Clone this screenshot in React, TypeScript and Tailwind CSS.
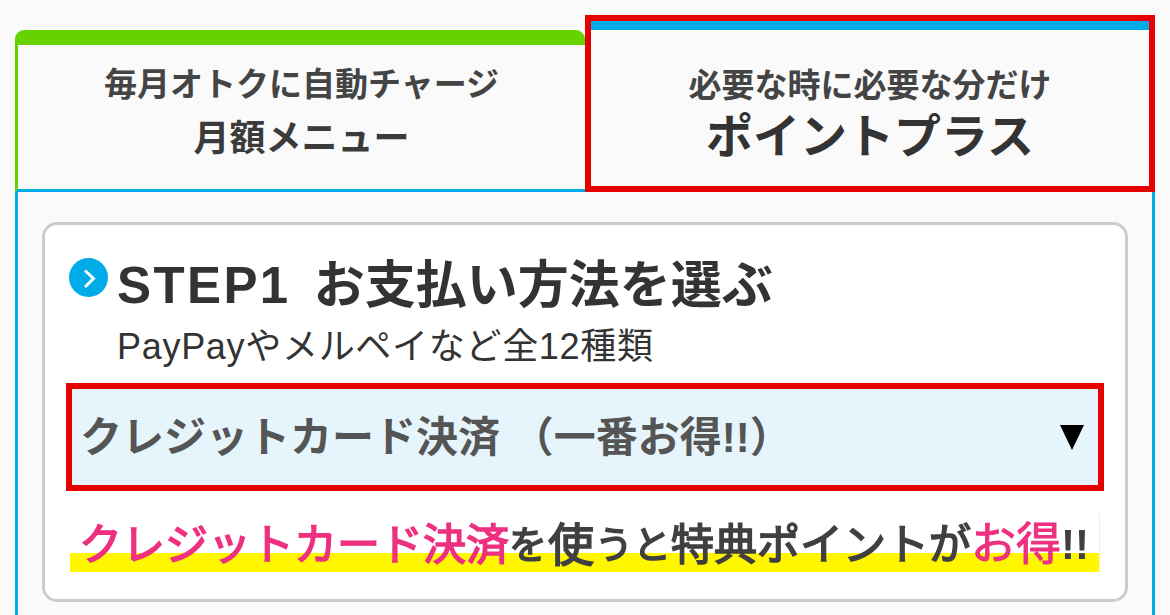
const cjk = { fontFamily: '"Liberation Sans", "Noto Sans CJK JP", sans-serif' };

export default function App() {
  return (
    <div style={cjk} className="h-[615px] w-[1170px] overflow-hidden bg-[#fafafa] px-[15px] pt-[15px] text-[#333]">
      <div className="flex h-[177px] w-[1140px]">
        <div className="mt-[15px] flex w-[570px] flex-col items-center rounded-t-[9px] border-t-[15px] border-l-[3px] border-b-[3px] border-t-[#66d200] border-l-[#66d200] border-b-[#00ace8] pt-[16px] font-bold">
          <div className="text-[33px] leading-[48px] text-[#444]">毎月オトクに自動チャージ</div>
          <div className="mt-[6px] text-[36px] leading-[48px] text-[#3b3b3b]">月額メニュー</div>
        </div>
        <div className="w-[570px] border-[6px] border-[#e60000]">
          <div className="flex h-full flex-col items-center border-t-[9px] border-[#00ace8] pt-[32px] font-bold">
            <div className="text-[33px] leading-[48px] text-[#444]">必要な時に必要な分だけ</div>
            <div className="-mt-[3px] text-[47px] leading-[60px] text-[#333]">ポイントプラス</div>
          </div>
        </div>
      </div>
      <div className="h-[500px] w-[1140px] border-x-[3px] border-[#00ace8] px-[24px] pt-[30px]">
        <div className="h-[380px] rounded-[15px] border-[3px] border-[#ccc] bg-white px-[21px] pt-[27px]">
          <div className="flex items-start pl-[3px]">
            <svg width="39" height="39" viewBox="0 0 39 39" className="mt-[6px] shrink-0">
              <circle cx="19.5" cy="19.5" r="19.5" fill="#00ace8" />
              <path d="M16 12.5 L24.5 20.5 L16 29" fill="none" stroke="#fff" strokeWidth="3" />
            </svg>
            <div className="ml-[9px] pt-[4px]">
              <div className="whitespace-nowrap text-[51px] leading-[60px] font-bold text-[#333]">
                <span className="mr-[9px] tracking-[2.4px]">STEP1</span> お支払い方法を選ぶ
              </div>
              <div className="mt-[7px] whitespace-nowrap text-[36px] leading-[48px] font-normal tracking-[0.7px] text-[#333]">PayPayやメルペイなど全12種類</div>
            </div>
          </div>
          <div className="mt-[12px] flex h-[108px] items-center justify-between border-[6px] border-[#e60000] bg-[#e5f5fb] pr-[14px] pl-[8px]">
            <span className="text-[42px] font-bold text-[#555]">クレジットカード決済 （一番お得!!）</span>
            <svg width="24" height="26" viewBox="0 0 24 26">
              <polygon points="0,1 24,1 12,26" fill="#000" />
            </svg>
          </div>
          <div className="mt-[22px] ml-[4px] flex h-[62px] w-[1030px] items-start whitespace-nowrap border-r border-[#f0f0e0] bg-[linear-gradient(transparent_40px,#fff600_40px,#fff600_59px,transparent_59px)] pl-[9px] font-normal leading-[64px] text-[#404040] blur-[0.5px] [-webkit-text-stroke:1.6px_currentColor]">
            <span className="text-[43px] text-[#ee3080]">クレジットカード決済</span>
            <span className="text-[38px]">を</span>
            <span className="mx-[1px] text-[46px]">使</span>
            <span className="text-[38px]">う</span>
            <span className="text-[38px]">と</span>
            <span className="text-[43px]">特典ポイント</span>
            <span className="text-[42px]">が</span>
            <span className="text-[45px] text-[#ee3080] [-webkit-text-stroke:1px_currentColor]">お得</span>
            <span className="text-[42px] font-bold [-webkit-text-stroke:0]">!!</span>
          </div>
        </div>
      </div>
    </div>
  );
}
